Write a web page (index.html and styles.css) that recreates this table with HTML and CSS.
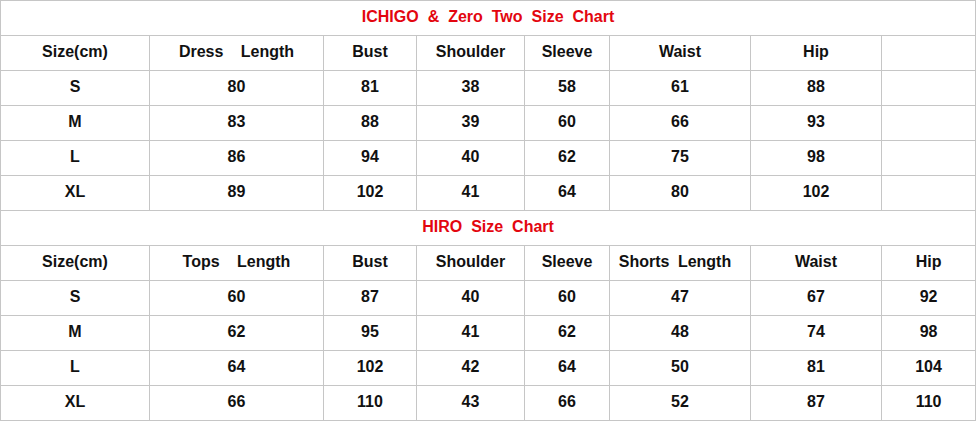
FILE: index.html
```html
<!DOCTYPE html>
<html>
<head>
<meta charset="utf-8">
<link rel="stylesheet" href="styles.css">
</head>
<body>
<table class="chart">
  <colgroup>
    <col class="c1"><col class="c2"><col class="c3"><col class="c4"><col class="c5"><col class="c6"><col class="c7"><col class="c8">
  </colgroup>
  <tbody>
    <tr><td class="title" colspan="8">ICHIGO &amp; Zero Two Size Chart</td></tr>
    <tr><td>Size(cm)</td><td class="wide">Dress Length</td><td>Bust</td><td>Shoulder</td><td>Sleeve</td><td>Waist</td><td>Hip</td><td></td></tr>
    <tr><td>S</td><td>80</td><td>81</td><td>38</td><td>58</td><td>61</td><td>88</td><td></td></tr>
    <tr><td>M</td><td>83</td><td>88</td><td>39</td><td>60</td><td>66</td><td>93</td><td></td></tr>
    <tr><td>L</td><td>86</td><td>94</td><td>40</td><td>62</td><td>75</td><td>98</td><td></td></tr>
    <tr><td>XL</td><td>89</td><td>102</td><td>41</td><td>64</td><td>80</td><td>102</td><td></td></tr>
    <tr><td class="title" colspan="8">HIRO Size Chart</td></tr>
    <tr><td>Size(cm)</td><td class="wide">Tops Length</td><td>Bust</td><td>Shoulder</td><td>Sleeve</td><td class="mid">Shorts Length</td><td>Waist</td><td>Hip</td></tr>
    <tr><td>S</td><td>60</td><td>87</td><td>40</td><td>60</td><td>47</td><td>67</td><td>92</td></tr>
    <tr><td>M</td><td>62</td><td>95</td><td>41</td><td>62</td><td>48</td><td>74</td><td>98</td></tr>
    <tr><td>L</td><td>64</td><td>102</td><td>42</td><td>64</td><td>50</td><td>81</td><td>104</td></tr>
    <tr><td>XL</td><td>66</td><td>110</td><td>43</td><td>66</td><td>52</td><td>87</td><td>110</td></tr>
  </tbody>
</table>
</body>
</html>
```
FILE: styles.css
```css
html, body {
  margin: 0;
  padding: 0;
  background: #ffffff;
}
.chart {
  border-collapse: collapse;
  table-layout: fixed;
  width: 976px;
  font-family: "Liberation Sans", Arial, sans-serif;
  font-weight: bold;
  font-size: 16px;
  color: #111111;
}
.c1 { width: 149px; }
.c2 { width: 174px; }
.c3 { width: 93px; }
.c4 { width: 108px; }
.c5 { width: 85px; }
.c6 { width: 141px; }
.c7 { width: 131px; }
.c8 { width: 94px; }
.chart td {
  border: 1px solid #c6c6c6;
  height: 35px;
  padding: 0 0 2px 0;
  text-align: center;
  vertical-align: middle;
  box-sizing: border-box;
  white-space: nowrap;
  line-height: 18px;
}
.chart td.title {
  color: #e3060f;
  word-spacing: 4.5px;
}
.chart td.wide {
  word-spacing: 13px;
}
.chart td.mid {
  word-spacing: 4px;
  padding-right: 10px;
}
```
